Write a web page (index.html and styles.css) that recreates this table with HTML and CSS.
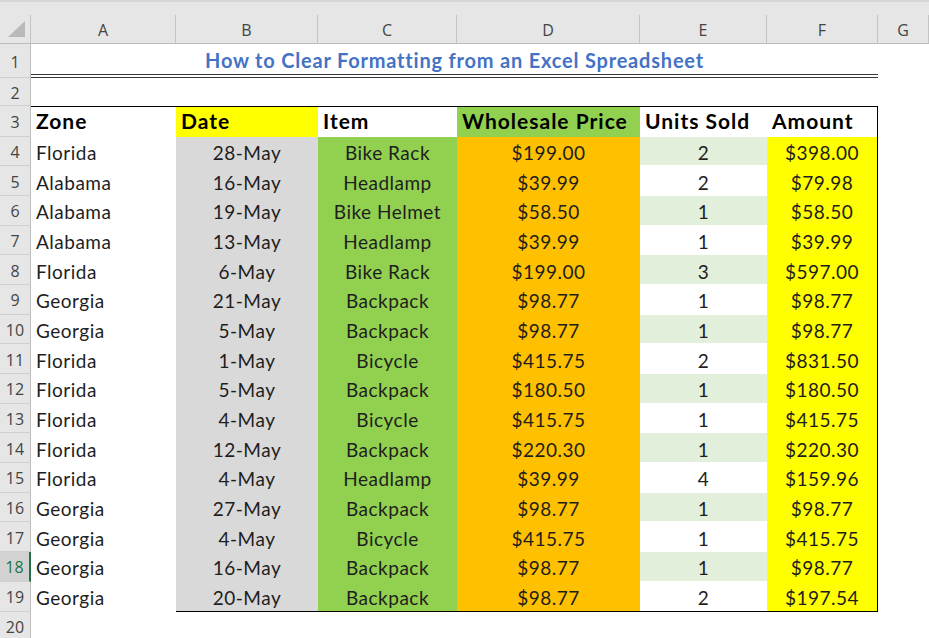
FILE: index.html
```html
<!DOCTYPE html>
<html>
<head>
<meta charset="utf-8">
<link rel="stylesheet" href="styles.css">
</head>
<body>
<div class="sheet">
  <div class="topstrip"></div>
  <div class="row colhead">
    <div class="corner"><svg width="18" height="17" viewBox="0 0 18 17"><polygon points="17,0 17,16 0,16" fill="#b9b9b9"/></svg></div>
    <div class="ch">A</div><div class="ch">B</div><div class="ch">C</div><div class="ch">D</div><div class="ch">E</div><div class="ch">F</div><div class="ch">G</div>
  </div>
  <div class="row r1">
    <div class="rh">1</div>
    <div class="title">How to Clear Formatting from an Excel Spreadsheet</div>
    <div class="c"></div>
  </div>
  <div class="row r2">
    <div class="rh">2</div>
    <div class="c"></div><div class="c"></div><div class="c"></div><div class="c"></div><div class="c"></div><div class="c"></div><div class="c"></div>
  </div>
  <div class="row hdr">
    <div class="rh">3</div>
    <div class="c a">Zone</div>
    <div class="c b">Date</div>
    <div class="c">Item</div>
    <div class="c d">Wholesale Price</div>
    <div class="c">Units Sold</div>
    <div class="c f">Amount</div>
    <div class="c"></div>
  </div>
  <div id="body"></div>
</div>
<script src="app.js"></script>
</body>
</html>
```
FILE: app.js
```js
const data = [
 [4,"Florida","28-May","Bike Rack","$199.00","2","$398.00"],
 [5,"Alabama","16-May","Headlamp","$39.99","2","$79.98"],
 [6,"Alabama","19-May","Bike Helmet","$58.50","1","$58.50"],
 [7,"Alabama","13-May","Headlamp","$39.99","1","$39.99"],
 [8,"Florida","6-May","Bike Rack","$199.00","3","$597.00"],
 [9,"Georgia","21-May","Backpack","$98.77","1","$98.77"],
 [10,"Georgia","5-May","Backpack","$98.77","1","$98.77"],
 [11,"Florida","1-May","Bicycle","$415.75","2","$831.50"],
 [12,"Florida","5-May","Backpack","$180.50","1","$180.50"],
 [13,"Florida","4-May","Bicycle","$415.75","1","$415.75"],
 [14,"Florida","12-May","Backpack","$220.30","1","$220.30"],
 [15,"Florida","4-May","Headlamp","$39.99","4","$159.96"],
 [16,"Georgia","27-May","Backpack","$98.77","1","$98.77"],
 [17,"Georgia","4-May","Bicycle","$415.75","1","$415.75"],
 [18,"Georgia","16-May","Backpack","$98.77","1","$98.77"],
 [19,"Georgia","20-May","Backpack","$98.77","2","$197.54"]
];
const body = document.getElementById('body');
let html = '';
data.forEach((r, i) => {
  const last = i === data.length - 1 ? ' last' : '';
  const sel = r[0] === 18 ? ' sel' : '';
  const alt = i % 2 === 0 ? ' alt' : '';
  html += `<div class="row data${last}">
    <div class="rh${sel}">${r[0]}</div>
    <div class="c a">${r[1]}</div>
    <div class="c b">${r[2]}</div>
    <div class="c cc">${r[3]}</div>
    <div class="c d">${r[4]}</div>
    <div class="c e${alt}">${r[5]}</div>
    <div class="c f">${r[6]}</div>
    <div class="c"></div>
  </div>`;
});
html += `<div class="row"><div class="rh">20</div><div class="c"></div><div class="c"></div><div class="c"></div><div class="c"></div><div class="c"></div><div class="c"></div><div class="c"></div></div>`;
body.innerHTML = html;
```
FILE: styles.css
```css
* { box-sizing: border-box; }
html, body { margin: 0; padding: 0; background: #fff; }
body { font-family: "Lato", "Liberation Sans", sans-serif; overflow: hidden; }
.sheet { width: 929px; height: 638px; overflow: hidden; }
.topstrip { height: 15px; background: #e6e6e6; border-top: 2px solid #d6d6d6; }
.row {
  display: grid;
  grid-template-columns: 31px 145px 142px 139px 183px 127px 111px 1fr;
  height: 29.7px;
}
.colhead { height: 29px; background: #e6e6e6; border-bottom: 1px solid #bcbcbc; }
.r1 { height: 34px; }
.r2 { height: 28px; }
.hdr { height: 30.5px; }
.corner { display: flex; align-items: flex-end; justify-content: flex-end; padding: 0 4px 5px 0; border-right: 1px solid #c4c4c4; }
.ch {
  font-family: "Open Sans", "Noto Sans", sans-serif;
  font-size: 16px; color: #444;
  display: flex; align-items: center; justify-content: center;
  border-right: 1px solid #c4c4c4;
  padding-top: 2px;
}
.rh {
  background: #e6e6e6;
  border-right: 1px solid #bcbcbc;
  border-bottom: 1px solid #cfcfcf;
  font-family: "Open Sans", "Noto Sans", sans-serif;
  font-size: 16px; color: #444;
  display: flex; align-items: center; justify-content: center;
  padding-top: 2px;
}
.rh.sel { background: #d2d2d2; color: #217346; border-right: 2px solid #217346; }
.c {
  font-size: 19px; letter-spacing: 0.5px; color: #1e1e1e;
  display: flex; align-items: center; padding: 2px 5px 0 5px;
  white-space: nowrap;
}
.title {
  grid-column: 2 / 8;
  display: flex; align-items: center; justify-content: center;
  font-size: 20px; letter-spacing: 0.8px; font-weight: 700; color: #4472c4;
  border-bottom: 4px double #3a3a3a;
  padding-top: 2px;
}
.hdr .c { font-size: 21px; letter-spacing: 1px; font-weight: 700; color: #000; border-top: 1px solid #000; padding-top: 0; padding-bottom: 3px; }
.hdr .c:last-child { border-top: none; }
.hdr .b { background: #ffff00; }
.hdr .d { background: #92d050; }
.hdr .f { border-right: 1px solid #000; }
.data .c { justify-content: center; }
.data .a { justify-content: flex-start; }
.data .b { background: #d9d9d9; }
.data .cc { background: #92d050; }
.data .d { background: #ffc000; }
.data .e.alt { background: #e2efda; box-shadow: inset 0 -1px 0 #fff; }
.data .f { background: #ffff00; border-right: 1px solid #000; }
.last .b, .last .cc, .last .d, .last .e, .last .f { border-bottom: 1px solid #000; }
```
